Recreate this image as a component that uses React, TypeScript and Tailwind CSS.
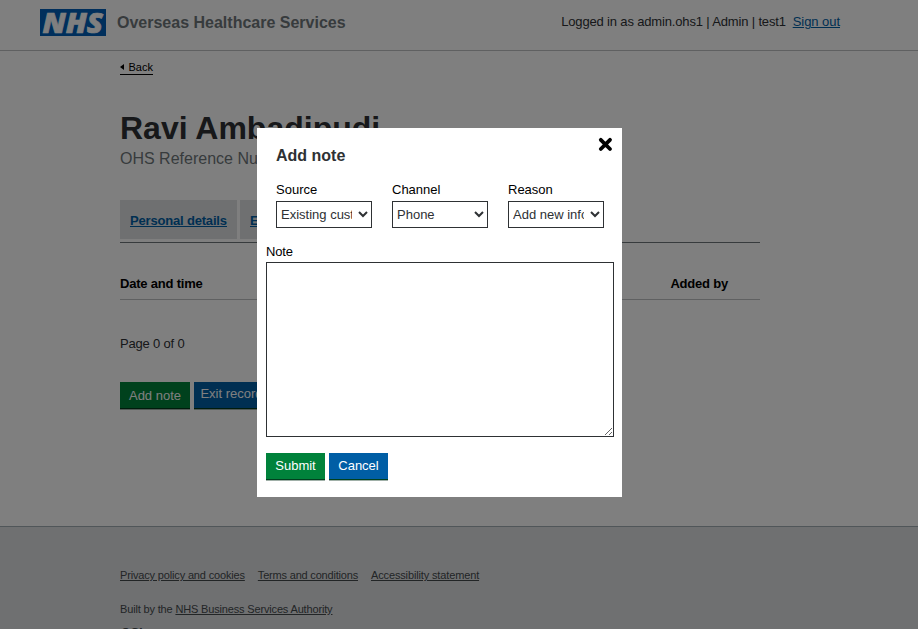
import React from "react";

function NhsLogo() {
  return (
    <svg width="66" height="27" viewBox="0 0 66 27" className="block" role="img" aria-label="NHS">
      <rect width="66" height="27" fill="#005eb8" />
      <text
        x="2.4"
        y="24"
        fontFamily="'Open Sans', 'Liberation Sans', sans-serif"
        fontWeight="800"
        fontStyle="italic"
        fontSize="29"
        fill="#fff"
        stroke="#fff"
        strokeWidth="0.7"
        textLength="60.5"
        lengthAdjust="spacingAndGlyphs"
      >
        NHS
      </text>
    </svg>
  );
}

function Header() {
  return (
    <header className="flex h-[51px] items-start border-b border-[#bfc1c3] pl-10 pr-[78px]">
      <div className="pt-[9px]">
        <NhsLogo />
      </div>
      <span className="ml-[11px] pt-[11px] text-base/6 font-bold text-[#6f777b]">Overseas Healthcare Services</span>
      <div className="ml-auto pt-3 text-[13px]/5 tracking-[-0.16px] text-[#2e3134]">
        Logged in as admin.ohs1 | Admin | test1&nbsp;{" "}
        <a className="tracking-[-0.05px] text-[#005ea5] underline">Sign out</a>
      </div>
    </header>
  );
}

function Field({ label, value }: { label: string; value: string }) {
  return (
    <label className="flex w-24 flex-col text-[13px]/5">
      {label}
      <select className="mt-px h-[27px] w-24 border border-[#2e3134] bg-white pr-[3px] text-[13px] text-[#2e3134]">
        <option>{value}</option>
      </select>
    </label>
  );
}

function NoteDialog() {
  return (
    <div className="fixed inset-0 bg-black/50 pl-[257px] pt-32">
      <div role="dialog" className="flex h-[369px] w-[365px] flex-col bg-white px-[9px]">
        <div className="flex justify-between pl-[10px]">
          <h2 className="pt-[18px] text-base/5 font-bold text-[#2e3134]">Add note</h2>
          <svg width="15" height="15" viewBox="0 0 15 15" className="mt-[9px]" aria-label="Close">
            <path d="M2.8 2.8 12 12M12 2.8 2.8 12" stroke="#000" strokeWidth="3.8" strokeLinecap="round" />
          </svg>
        </div>
        <div className="mt-[14px] flex gap-5 pl-[10px]">
          <Field label="Source" value="Existing customer" />
          <Field label="Channel" value="Phone" />
          <Field label="Reason" value="Add new information" />
        </div>
        <label className="mt-[14px] flex flex-col text-[13px]/5 tracking-[-0.16px]">
          Note
          <textarea className="h-[175px] w-[348px] border border-[#2e3134] bg-white" />
        </label>
        <div className="mt-4 flex gap-1 text-[13px] text-white">
          <button className="h-[27px] w-[59px] border-b border-[#00401e] bg-[#00823b] pb-px shadow-[0_1px_0_#a0b0a8]">Submit</button>
          <button className="h-[27px] w-[59px] border-b border-[#00401e] bg-[#005ea5] pb-px shadow-[0_1px_0_#a0b0a8]">Cancel</button>
        </div>
      </div>
    </div>
  );
}

function Footer() {
  return (
    <footer className="h-[103px] overflow-hidden border-t border-[#a1acb2] bg-[#dee0e2] pl-[120px] pt-10 text-[11px]/4 tracking-[-0.16px] text-[#454a4d]">
      <nav className="flex gap-[13px]">
        <a className="underline">Privacy policy and cookies</a>
        <a className="tracking-[-0.19px] underline">Terms and conditions</a>
        <a className="tracking-[-0.14px] underline">Accessibility statement</a>
      </nav>
      <p className="mt-[18px]">
        Built by the <a className="underline">NHS Business Services Authority</a>
      </p>
      <p className="mt-[8px] pl-px text-[12px]/4 font-bold">OGL</p>
    </footer>
  );
}

export default function App() {
  return (
    <div className="flex h-[629px] flex-col overflow-hidden bg-white font-['Liberation_Sans',Arial,sans-serif] text-black">
      <Header />
      <main className="h-[475px] pl-[120px] pr-[158px]">
        <a className="mt-[9px] flex h-[15px] w-[33px] items-start justify-between border-b border-black pt-px text-[11px]/3">
          <svg width="4" height="6" viewBox="0 0 4 6" className="mt-[3px]">
            <path d="M4 0v6L0 3z" />
          </svg>
          Back
        </a>
        <h1 className="mt-[33px] text-[32px]/10 font-bold text-[#2e3134]">Ravi Ambadipudi</h1>
        <p className="mt-px text-base/5 text-[#6f777b]">OHS Reference Number</p>
        <nav className="mt-[31px] flex h-[43px] w-[640px] gap-[3px] border-b border-[#6f777b] text-[13px]/5 font-bold tracking-[-0.18px] text-[#005ea5] underline">
          <a className="h-[39px] w-[117px] bg-[#dee0e2] pl-[10px] pt-[11px]">Personal details</a>
          <a className="h-[39px] w-[117px] bg-[#dee0e2] pl-[10px] pt-[11px]">Entitlements</a>
        </nav>
        <div className="flex h-[57px] w-[640px] justify-between border-b border-[#bfc1c3] pr-8 pt-[31px] text-[13px]/5 font-bold tracking-[-0.2px]">
          <span>Date and time</span>
          <span>Added by</span>
        </div>
        <p className="mt-[34px] text-[13px]/5 tracking-[-0.18px] text-[#2e3134]">Page 0 of 0</p>
        <div className="mt-7 flex gap-1 text-[13px] text-white">
          <button className="h-[27px] w-[70px] border-b border-[#003618] bg-[#00823b] pt-px shadow-[0_1px_0_#a0b0a8]">Add note</button>
          <button className="h-[27px] w-[75px] border-b border-[#003618] bg-[#005ea5] pb-[3px] shadow-[0_1px_0_#a0b0a8]">Exit record</button>
        </div>
      </main>
      <Footer />
      <NoteDialog />
    </div>
  );
}
